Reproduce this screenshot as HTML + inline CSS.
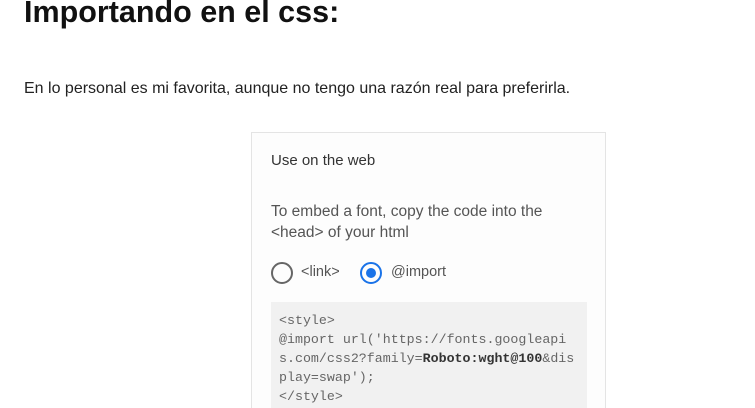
<!DOCTYPE html>
<html><head><meta charset="utf-8"><style>
html,body{margin:0;width:755px;height:408px;overflow:hidden}
body{background:#fff;font-family:"Liberation Sans",Arial,sans-serif;position:relative}
h1{position:absolute;left:24px;top:-5px;margin:0;font-size:30.5px;font-weight:bold;color:#111}
p.t{position:absolute;left:24px;top:80px;margin:0;font-size:16px;color:#222}
.card{position:absolute;left:251px;top:132px;width:353px;height:275px;border:1px solid #e4e4e4;border-bottom:none;background:#fdfdfd;overflow:hidden}
.h{position:absolute;left:19px;top:19px;font-size:15px;color:#333}
.d{position:absolute;left:19px;top:68px;font-size:15.5px;line-height:21px;color:#555}
.r{position:absolute;top:129px;width:18px;height:18px;border:2px solid #666;border-radius:50%}
.r2{border-color:#1a73e8}
.r2:after{content:"";position:absolute;left:4px;top:4px;width:10px;height:10px;border-radius:50%;background:#1a73e8}
.l{position:absolute;top:131px;font-size:14.5px;color:#555}
.code{position:absolute;left:19px;top:169px;width:316px;height:110px;background:#f1f1f1;font-family:"Liberation Mono",monospace;font-size:13.3px;line-height:19px;color:#666;padding:9px 0 0 8px;box-sizing:border-box;white-space:pre;overflow:hidden}
.code b{color:#333}
</style></head><body>
<h1>Importando en el css:</h1>
<p class="t">En lo personal es mi favorita, aunque no tengo una razón real para preferirla.</p>
<div class="card">
<div class="h">Use on the web</div>
<div class="d">To embed a font, copy the code into the<br>&lt;head&gt; of your html</div>
<div class="r" style="left:19px"></div><div class="l" style="left:49px">&lt;link&gt;</div>
<div class="r r2" style="left:108px"></div><div class="l" style="left:139px">@import</div>
<div class="code">&lt;style&gt;
@import url('https://fonts.googleapi
s.com/css2?family=<b>Roboto:wght@100</b>&amp;dis
play=swap');
&lt;/style&gt;</div>
</div>
</body></html>
